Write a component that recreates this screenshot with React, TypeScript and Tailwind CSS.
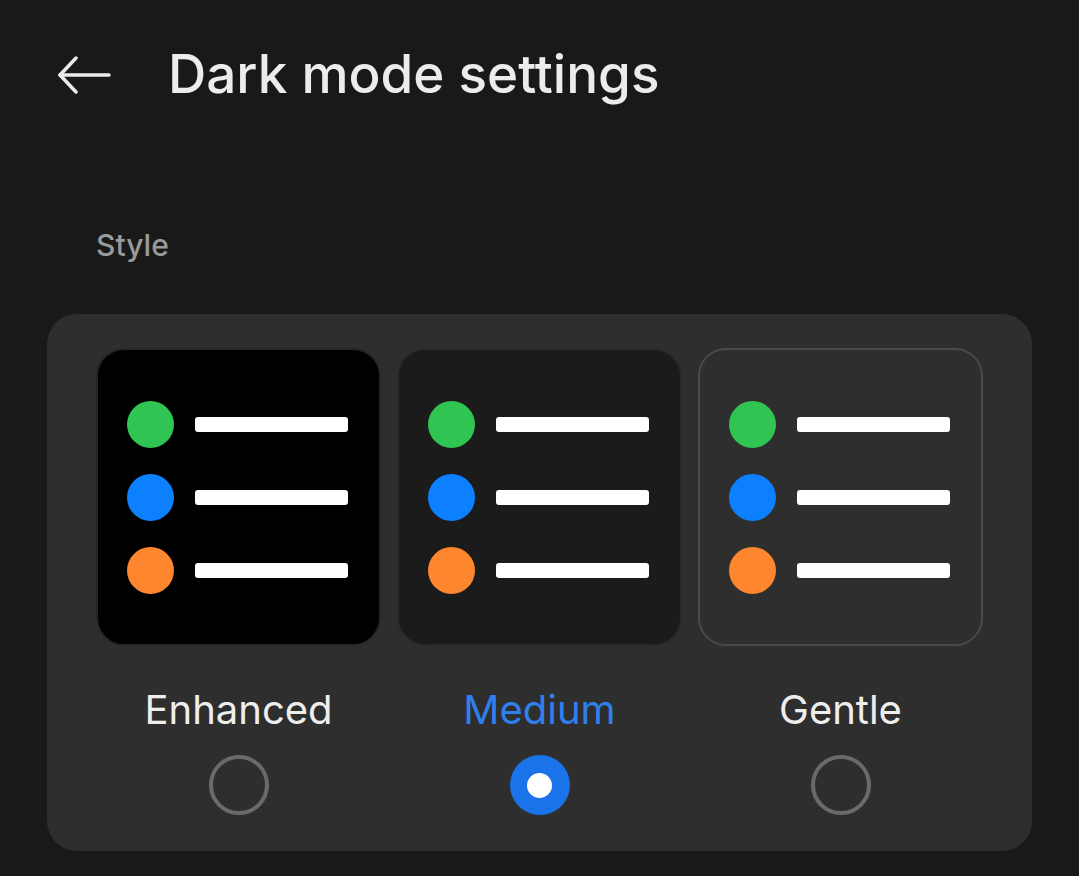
const tiles = [
  { key: "enhanced", label: "Enhanced", tile: "bg-black border-[#262626]" },
  { key: "medium", label: "Medium", tile: "bg-[#1b1b1b] border-[#2a2a2a]" },
  { key: "gentle", label: "Gentle", tile: "bg-[#2e2e2e] border-[#4a4a4a]" },
]

const dots = ["bg-[#30c552]", "bg-[#0c80fe]", "bg-[#fd862e]"]

function Preview({ tile }: { tile: string }) {
  return (
    <div className={`h-[298px] rounded-[28px] border-2 ${tile} flex flex-col pt-[51px] pl-[29px] gap-[26px]`}>
      {dots.map((d) => (
        <div key={d} className="flex items-center gap-[21px]">
          <div className={`w-[47px] h-[47px] rounded-full ${d}`} />
          <div className="w-[153px] h-[15px] rounded-[3px] bg-white" />
        </div>
      ))}
    </div>
  )
}

export default function App() {
  const selected = "medium"
  return (
    <div className="w-[1079px] h-[876px] bg-[#191919] overflow-hidden" style={{ fontFamily: "Inter, Roboto, sans-serif" }}>
      <div className="h-[150px] flex items-center pl-[57px]">
        <svg width="54" height="38" viewBox="0 0 54 38" fill="none" stroke="#ececec" strokeWidth="3.5" strokeLinecap="round" strokeLinejoin="round">
          <path d="M52 19H3" />
          <path d="M19 2L3 19l16 17" />
        </svg>
        <h1 className="ml-[57px] text-[53px] font-medium text-[#ececec]">Dark mode settings</h1>
      </div>
      <div className="pl-[96px] pt-[77px] text-[30px] font-medium text-[#9a9a9a] leading-[36px]">Style</div>
      <div className="mx-[47px] mt-[51px] bg-[#2e2e2e] rounded-[30px] pt-[34px] px-[49px] h-[537px]">
        <div className="grid grid-cols-3 gap-[16px]">
          {tiles.map((t) => {
            const on = t.key === selected
            return (
              <div key={t.key} className="flex flex-col items-center">
                <div className="w-full">
                  <Preview tile={t.tile} />
                </div>
                <div className={`mt-[40px] text-[40px] leading-[48px] ${on ? "text-[#2f80ed]" : "text-[#eeeeee]"}`}>{t.label}</div>
                <div className="mt-[21px]">
                  {on ? (
                    <div className="w-[60px] h-[60px] rounded-full bg-[#1a73e8] flex items-center justify-center">
                      <div className="w-[25px] h-[25px] rounded-full bg-white" />
                    </div>
                  ) : (
                    <div className="w-[60px] h-[60px] rounded-full border-4 border-[#6a6a6a]" />
                  )}
                </div>
              </div>
            )
          })}
        </div>
      </div>
    </div>
  )
}
